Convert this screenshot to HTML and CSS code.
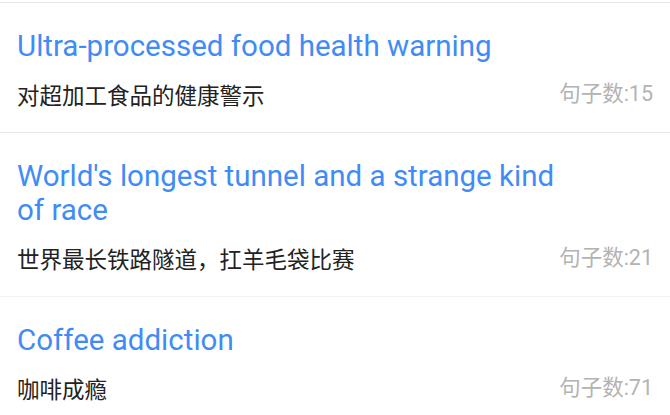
FILE: index.html
```html
<!DOCTYPE html>
<html lang="zh-CN">
<head>
<meta charset="utf-8">
<title>Articles</title>
<link rel="stylesheet" href="styles.css">
</head>
<body>
<ul class="list">
  <li class="item">
    <div class="title">Ultra-processed food health warning</div>
    <div class="meta">
      <span class="sub">对超加工食品的健康警示</span>
      <span class="count">句子数:15</span>
    </div>
  </li>
  <li class="item">
    <div class="title">World's longest tunnel and a strange kind of race</div>
    <div class="meta">
      <span class="sub">世界最长铁路隧道，扛羊毛袋比赛</span>
      <span class="count">句子数:21</span>
    </div>
  </li>
  <li class="item item-last">
    <div class="title">Coffee addiction</div>
    <div class="meta">
      <span class="sub">咖啡成瘾</span>
      <span class="count">句子数:71</span>
    </div>
  </li>
</ul>
</body>
</html>
```
FILE: styles.css
```css
html, body {
  margin: 0;
  padding: 0;
  background: #ffffff;
}
body {
  font-family: Roboto, "Noto Sans CJK SC", sans-serif;
}
.list {
  list-style: none;
  margin: 0;
  padding: 2px 0 0 0;
}
.item {
  border-top: 1px solid #e8e8e8;
  padding: 26px 17px 23px 17px;
}
.item-last {
  border-top-color: #f2f2f2;
}
.title {
  color: #3f8cf6;
  font-size: 29.5px;
  line-height: 34px;
  max-width: 560px;
}
.meta {
  display: flex;
  justify-content: space-between;
  align-items: center;
  margin-top: 16px;
  line-height: 30px;
}
.sub {
  color: #222222;
  font-size: 22.5px;
  font-family: "Noto Sans CJK SC", sans-serif;
}
.count {
  color: #b3b3b3;
  font-size: 21.5px;
  font-family: Roboto, "Noto Sans CJK SC", sans-serif;
}
```
